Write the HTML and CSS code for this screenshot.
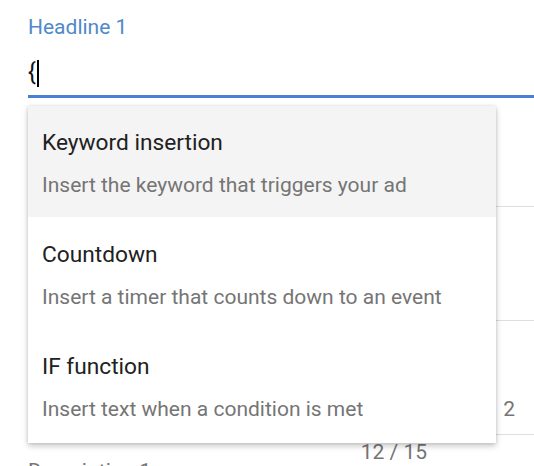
FILE: index.html
```html
<!DOCTYPE html>
<html>
<head>
<meta charset="utf-8">
<link rel="stylesheet" href="styles.css">
</head>
<body>
<div class="page">
  <div class="field">
    <div class="label">Headline 1</div>
    <div class="input"><span class="value">{</span><span class="cursor"></span></div>
  </div>
  <div class="row row-a"></div>
  <div class="row row-b"></div>
  <div class="row row-c"><span class="tail">2</span></div>
  <div class="counter">12 / 15</div>
  <div class="next-label">Description 1</div>

  <div class="menu">
    <div class="item active">
      <div class="title">Keyword insertion</div>
      <div class="sub">Insert the keyword that triggers your ad</div>
    </div>
    <div class="item">
      <div class="title">Countdown</div>
      <div class="sub">Insert a timer that counts down to an event</div>
    </div>
    <div class="item">
      <div class="title">IF function</div>
      <div class="sub">Insert text when a condition is met</div>
    </div>
  </div>
</div>
</body>
</html>
```
FILE: styles.css
```css
html, body {
  margin: 0;
  padding: 0;
  background: #fff;
  overflow: hidden;
}
body {
  font-family: Roboto, "Liberation Sans", sans-serif;
  width: 534px;
  height: 466px;
}
.page {
  position: relative;
  width: 534px;
  height: 466px;
  overflow: hidden;
}
.field {
  margin-left: 28px;
  padding-top: 14px;
}
.label {
  font-size: 21px;
  line-height: 26px;
  color: #4f89c7;
}
.input {
  margin-top: 17px;
  height: 32px;
  line-height: 32px;
  font-size: 23px;
  color: #111;
  padding-bottom: 6px;
  border-bottom: 3px solid #4a7fd8;
  display: flex;
  align-items: center;
}
.cursor {
  display: inline-block;
  width: 2px;
  height: 27px;
  background: #000;
  margin-left: 1px;
}
.row {
  margin-left: 28px;
  border-bottom: 1px solid #dedede;
  display: flex;
  justify-content: flex-end;
  align-items: flex-end;
}
.row-a { height: 108px; }
.row-b { height: 113px; }
.row-c {
  height: 100px;
  padding-bottom: 13px;
  padding-right: 19px;
}
.tail {
  font-size: 21px;
  line-height: 24px;
  color: #757575;
}
.counter {
  margin-top: 5px;
  text-align: right;
  padding-right: 107px;
  font-size: 21px;
  line-height: 24px;
  color: #757575;
}
.next-label {
  margin-top: -5px;
  margin-left: 28px;
  font-size: 21px;
  line-height: 24px;
  color: #757575;
}
.menu {
  position: absolute;
  top: 106px;
  left: 28px;
  width: 468px;
  background: #fff;
  padding-bottom: 2px;
  box-shadow: 0 3px 6px rgba(0,0,0,0.22), 0 0 3px rgba(0,0,0,0.12);
}
.item {
  box-sizing: border-box;
  height: 112px;
  padding: 25px 14px 0;
}
.item:first-child {
  height: 111px;
  padding-top: 24px;
}
.item.active {
  background: #f4f4f4;
}
.title {
  font-size: 22.7px;
  line-height: 26px;
  color: #212121;
}
.sub {
  margin-top: 16px;
  font-size: 21px;
  line-height: 26px;
  color: #757575;
}
```
